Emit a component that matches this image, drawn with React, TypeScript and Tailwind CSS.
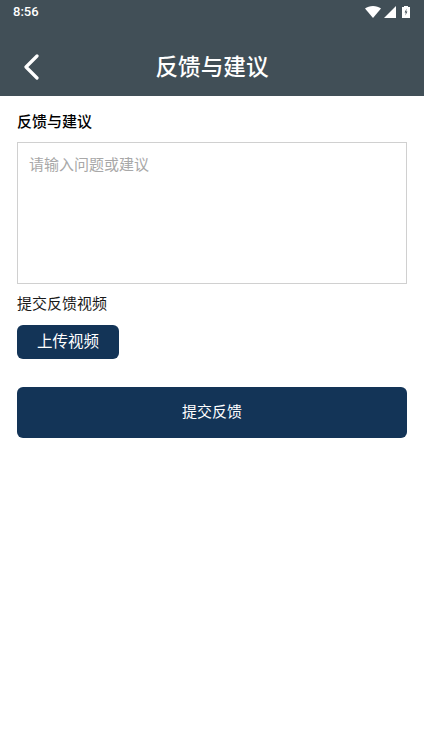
const cjk = "font-['Roboto','Noto_Sans_CJK_SC',sans-serif]";

function StatusIcons() {
  return (
    <div className="flex items-center gap-[3px]">
      <svg width="16" height="12" viewBox="0 0 16 12">
        <path d="M0 2.5C2 .9 5 0 8 0s6 .9 8 2.5L8 12z" fill="#fff" />
      </svg>
      <svg width="12" height="12" viewBox="0 0 12 12">
        <path d="M12 0v12H0z" fill="#fff" />
      </svg>
      <svg className="ml-[3px]" width="8" height="12" viewBox="0 0 8 12">
        <path d="M2 0h4v1h2v11H0V1h2z" fill="#fff" />
        <path d="M4.6 2.5 2.6 6.6h1.2L3.4 9.6l2-4.1H4.2z" fill="#414f57" />
      </svg>
    </div>
  );
}

export default function App() {
  return (
    <div className={`min-h-[755px] bg-white ${cjk}`}>
      <div className="bg-[#414f57] text-white">
        <div className="flex h-6 items-center justify-between pl-[13px] pr-[14px]">
          <span className="text-[13px] font-medium">8:56</span>
          <StatusIcons />
        </div>
        <div className="relative flex h-[72px] items-center justify-center pb-[2px]">
          <button className="absolute left-[23px] top-[30px]">
            <svg width="16" height="26" viewBox="0 0 16 26" fill="none" className="block">
              <path d="M14 2 3 13l11 11" stroke="#fff" strokeWidth="3.2" strokeLinecap="round" strokeLinejoin="round" />
            </svg>
          </button>
          <h1 className="mt-[18px] text-[22.6px] leading-7 font-medium">反馈与建议</h1>
        </div>
      </div>

      <div className="flex flex-col px-[17px]">
        <label className="mt-4 text-[15px] leading-5 font-medium text-black">反馈与建议</label>
        <textarea
          className={`mt-[10px] h-[142px] w-full resize-none border border-[#d0d0d0] px-[11px] py-[10px] text-[15px] leading-6 outline-none placeholder:text-[#a8a8a8] ${cjk}`}
          placeholder="请输入问题或建议"
        />
        <span className="mt-[10px] text-[15px] leading-5 text-[#1a1a1a]">提交反馈视频</span>
        <button className="mt-[11px] h-[34px] w-[102px] rounded-md bg-[#133457] pt-[2px] text-[15.5px] text-white">
          上传视频
        </button>
        <button className="mt-[28px] h-[51px] w-full rounded-md bg-[#133457] text-[15px] text-white">
          提交反馈
        </button>
      </div>
    </div>
  );
}
